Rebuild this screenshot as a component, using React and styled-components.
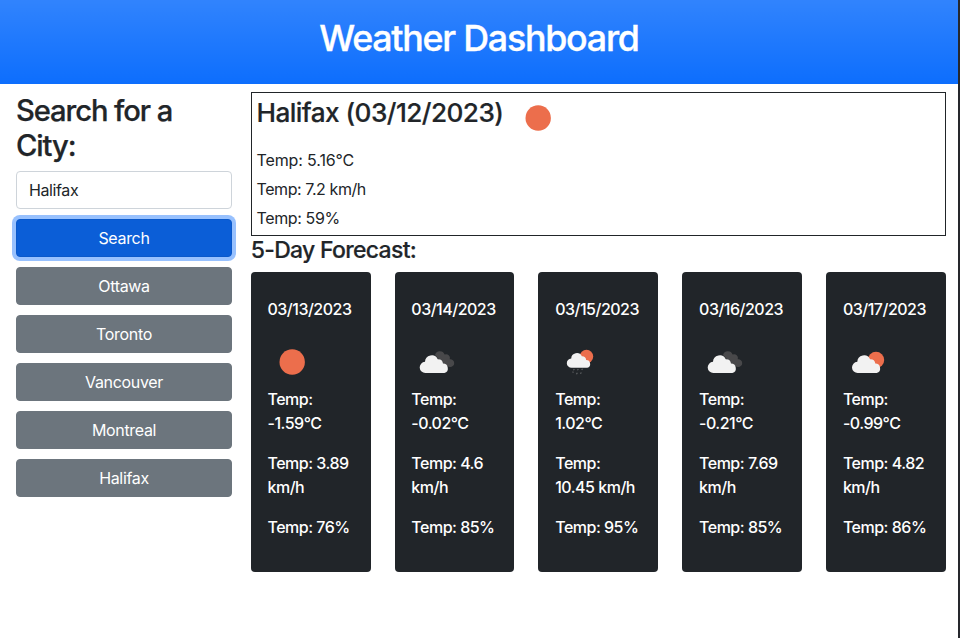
import React from "react";
import styled, { createGlobalStyle } from "styled-components";

const GlobalStyle = createGlobalStyle`
  *, *::before, *::after { box-sizing: border-box; }
  body {
    margin: 0;
    background: #fff;
    color: #212529;
    font-family: Inter, "Liberation Sans", sans-serif;
    font-size: 16px;
    line-height: 24px;
    letter-spacing: -0.32px;
  }
  h1, h2, h3, h4, p { margin: 0; }
`;

const Page = styled.div`
  min-height: 638px;
  border-right: 2px solid #26282d;
`;

const Header = styled.header`
  height: 84px;
  padding-top: 16px;
  background: #0d6efd linear-gradient(180deg, rgba(255, 255, 255, 0.15), rgba(255, 255, 255, 0));
  color: #fff;
  text-align: center;
`;

const Title = styled.h1`
  font-size: 35.8px;
  font-weight: 500;
  line-height: 44px;
  letter-spacing: -1.25px;
  -webkit-text-stroke: 0.35px currentColor;
`;

const Columns = styled.div`
  display: flex;
  gap: 18.7px;
  padding: 8px 12px 0 16px;
`;

const Sidebar = styled.aside`
  display: flex;
  flex-direction: column;
  flex: none;
  gap: 10px;
  width: 216px;
`;

const SearchHeading = styled.h2`
  margin-bottom: -2px;
  padding-top: 1px;
  font-size: 29.2px;
  font-weight: 500;
  line-height: 35px;
  letter-spacing: -1.1px;
  -webkit-text-stroke: 0.25px currentColor;
`;

const SearchInput = styled.input`
  width: 100%;
  height: 38px;
  padding: 6px 12px;
  border: 1px solid #ced4da;
  border-radius: 4px;
  background: #fff;
  color: inherit;
  font: inherit;
  letter-spacing: -0.4px;
`;

const Button = styled.button`
  height: 38px;
  padding: 0;
  border: 1px solid ${(p) => (p.$primary ? "#0a58ca" : "#6c757d")};
  border-radius: 4px;
  background: ${(p) => (p.$primary ? "#0b5ed7" : "#6c757d")};
  box-shadow: ${(p) => (p.$primary ? "0 0 0 4px #98c1fe" : "none")};
  color: #fff;
  font: inherit;
  letter-spacing: -0.33px;
`;

const Main = styled.main`
  flex: 1;
`;

const Current = styled.section`
  display: flex;
  flex-direction: column;
  gap: 5px;
  height: 144px;
  padding: 0 4.8px;
  border: 1px solid #212529;
`;

const CurrentTop = styled.div`
  display: flex;
  gap: 10px;
  height: 50px;
`;

const CityHeading = styled.h3`
  width: 246.5px;
  padding-top: 4px;
  font-size: 26.2px;
  font-weight: 500;
  line-height: 32px;
  letter-spacing: -0.56px;
  white-space: nowrap;
  -webkit-text-stroke: 0.2px currentColor;
`;

const Reading = styled.p`
  letter-spacing: ${(p) => p.$tracking};
`;

const ForecastHeading = styled.h4`
  height: 36px;
  font-size: 23px;
  font-weight: 500;
  line-height: 28px;
  letter-spacing: -0.7px;
  -webkit-text-stroke: 0.2px currentColor;
`;

const Forecast = styled.section`
  display: grid;
  grid-template-columns: repeat(5, minmax(0, 1fr));
  gap: 24px;
`;

const Card = styled.article`
  height: 300px;
  padding: 25px 16.3px 0 16.8px;
  border-radius: 4px;
  background: #212529;
  color: #fff;
  font-weight: 460;
  letter-spacing: -0.5px;
`;

const CardLine = styled.p`
  margin-bottom: 16px;
`;

const IconSvg = styled.svg`
  display: block;
  flex: none;
  width: 50px;
  height: 50px;
`;

const CLOUD =
  "M14.6 36a5.6 5.6 0 0 1-.6-11.2A6.7 6.7 0 0 1 26.8 22.2a5 5 0 0 1 5.2 4.4A4.8 4.8 0 0 1 33.4 36Z";

function WeatherIcon({ kind }) {
  return (
    <IconSvg viewBox="0 0 50 50">
      {kind === "clear" && <circle cx="25.2" cy="25" r="12.7" fill="#ec6e4c" />}
      {kind === "clouds" && (
        <>
          <path
            d="M24 18A5 5 0 0 1 33.6 17.6A3.8 3.8 0 0 1 38.8 22.2A3.9 3.9 0 1 1 38.6 29.9L33 28Z"
            fill="#48484a"
          />
          <path d={CLOUD} fill="#f2f2f2" />
        </>
      )}
      {kind === "partly" && (
        <>
          <circle cx="33" cy="23" r="8.2" fill="#ec6e4c" />
          <path d={CLOUD} fill="#f2f2f2" transform="translate(.3 0)" />
        </>
      )}
      {kind === "rain" && (
        <g transform="translate(.5 0)">
          <circle cx="31" cy="19.4" r="6.7" fill="#ec6e4c" />
          <path d={CLOUD} fill="#f2f2f2" transform="translate(4.1 .9) scale(.83)" />
          <path
            d="M18.8 32l-.8 1.2M22.8 32l-.8 1.2M27 31.8l-.8 1.2M17.8 34.6l-.6 1M21.8 35.8l-.8 1.4M25.8 35.4l-.8 1.4"
            stroke="#66686a"
            strokeWidth="1.1"
          />
        </g>
      )}
    </IconSvg>
  );
}

const cities = ["Ottawa", "Toronto", "Vancouver", "Montreal", "Halifax"];

const days = [
  { date: "03/13/2023", kind: "clear", temp: "-1.59°C", wind: "3.89 km/h", humidity: "76%" },
  { date: "03/14/2023", kind: "clouds", temp: "-0.02°C", wind: "4.6 km/h", humidity: "85%" },
  { date: "03/15/2023", kind: "rain", temp: "1.02°C", wind: "10.45 km/h", humidity: "95%" },
  { date: "03/16/2023", kind: "clouds", temp: "-0.21°C", wind: "7.69 km/h", humidity: "85%" },
  { date: "03/17/2023", kind: "partly", temp: "-0.99°C", wind: "4.82 km/h", humidity: "86%" },
];

export default function App() {
  return (
    <Page>
      <GlobalStyle />
      <Header>
        <Title>Weather Dashboard</Title>
      </Header>
      <Columns>
        <Sidebar>
          <SearchHeading>Search for a City:</SearchHeading>
          <SearchInput defaultValue="Halifax" aria-label="City" />
          <Button $primary>Search</Button>
          {cities.map((city) => (
            <Button key={city}>{city}</Button>
          ))}
        </Sidebar>
        <Main>
          <Current>
            <CurrentTop>
              <CityHeading>Halifax (03/12/2023)</CityHeading>
              <WeatherIcon kind="clear" />
            </CurrentTop>
            <Reading $tracking="-0.12px">Temp: 5.16°C</Reading>
            <Reading $tracking="-0.42px">Temp: 7.2 km/h</Reading>
            <Reading $tracking="-0.38px">Temp: 59%</Reading>
          </Current>
          <ForecastHeading>5-Day Forecast:</ForecastHeading>
          <Forecast>
            {days.map((day) => (
              <Card key={day.date}>
                <CardLine>{day.date}</CardLine>
                <WeatherIcon kind={day.kind} />
                <CardLine>{`Temp: ${day.temp}`}</CardLine>
                <CardLine>{`Temp: ${day.wind}`}</CardLine>
                <CardLine>{`Temp: ${day.humidity}`}</CardLine>
              </Card>
            ))}
          </Forecast>
        </Main>
      </Columns>
    </Page>
  );
}
